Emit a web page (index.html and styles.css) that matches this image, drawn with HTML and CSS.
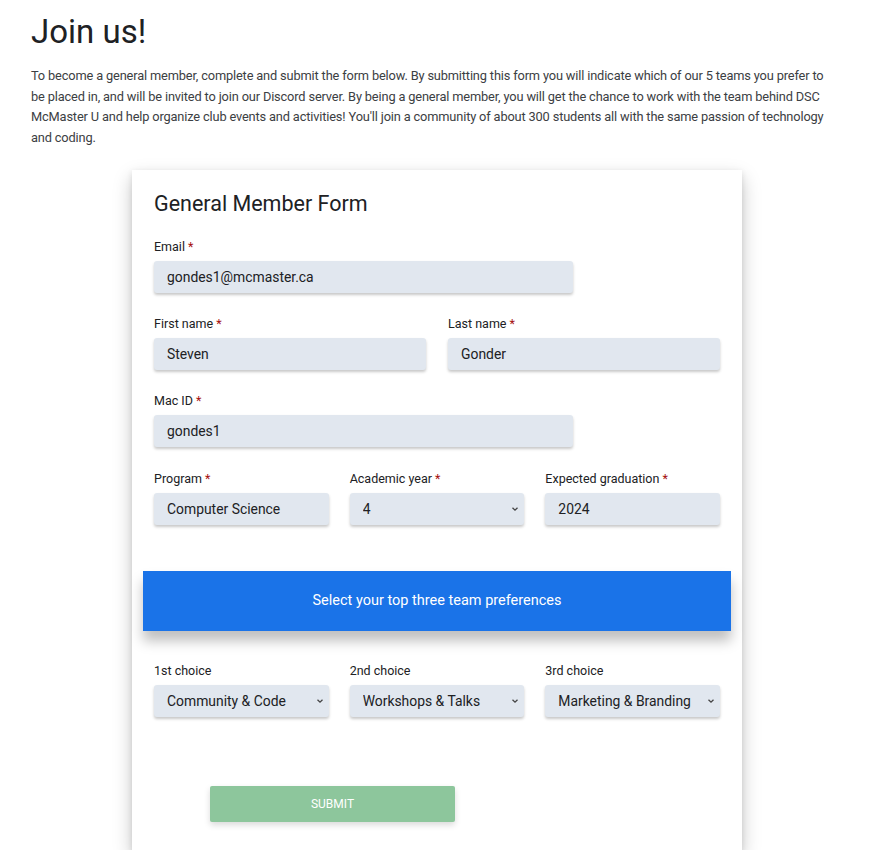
FILE: index.html
```html
<!DOCTYPE html>
<html lang="en">
<head>
<meta charset="utf-8">
<title>Join us!</title>
<link rel="stylesheet" href="styles.css">
</head>
<body>
<main class="page">
  <h1 class="title">Join us!</h1>
  <p class="intro">To become a general member, complete and submit the form below. By submitting this form you will indicate which of our 5 teams you prefer to be placed in, and will be invited to join our Discord server. By being a general member, you will get the chance to work with the team behind DSC McMaster U and help organize club events and activities! You'll join a community of about 300 students all with the same passion of technology and coding.</p>

  <form class="card">
    <h2 class="card-title">General Member Form</h2>

    <div class="field wide">
      <label class="label">Email <span class="req">*</span></label>
      <input class="control" type="text" value="gondes1@mcmaster.ca">
    </div>

    <div class="row two">
      <div class="field">
        <label class="label">First name <span class="req">*</span></label>
        <input class="control" type="text" value="Steven">
      </div>
      <div class="field">
        <label class="label">Last name <span class="req">*</span></label>
        <input class="control" type="text" value="Gonder">
      </div>
    </div>

    <div class="field wide">
      <label class="label">Mac ID <span class="req">*</span></label>
      <input class="control" type="text" value="gondes1">
    </div>

    <div class="row three">
      <div class="field">
        <label class="label">Program <span class="req">*</span></label>
        <input class="control" type="text" value="Computer Science">
      </div>
      <div class="field">
        <label class="label">Academic year <span class="req">*</span></label>
        <div class="select-wrap">
          <select class="control select"><option>4</option></select>
          <svg class="chev" width="8" height="6" viewBox="0 0 8 6"><path d="M1.5 1.8 L4 4.2 L6.5 1.8" fill="none" stroke="#444" stroke-width="1.3"/></svg>
        </div>
      </div>
      <div class="field">
        <label class="label">Expected graduation <span class="req">*</span></label>
        <input class="control" type="text" value="2024">
      </div>
    </div>

    <div class="banner">Select your top three team preferences</div>

    <div class="row three choices">
      <div class="field">
        <label class="label">1st choice</label>
        <div class="select-wrap">
          <select class="control select"><option>Community &amp; Code</option></select>
          <svg class="chev" width="8" height="6" viewBox="0 0 8 6"><path d="M1.5 1.8 L4 4.2 L6.5 1.8" fill="none" stroke="#444" stroke-width="1.3"/></svg>
        </div>
      </div>
      <div class="field">
        <label class="label">2nd choice</label>
        <div class="select-wrap">
          <select class="control select"><option>Workshops &amp; Talks</option></select>
          <svg class="chev" width="8" height="6" viewBox="0 0 8 6"><path d="M1.5 1.8 L4 4.2 L6.5 1.8" fill="none" stroke="#444" stroke-width="1.3"/></svg>
        </div>
      </div>
      <div class="field">
        <label class="label">3rd choice</label>
        <div class="select-wrap">
          <select class="control select"><option>Marketing &amp; Branding</option></select>
          <svg class="chev" width="8" height="6" viewBox="0 0 8 6"><path d="M1.5 1.8 L4 4.2 L6.5 1.8" fill="none" stroke="#444" stroke-width="1.3"/></svg>
        </div>
      </div>
    </div>

    <div class="actions">
      <button class="submit" type="button">SUBMIT</button>
    </div>
  </form>
</main>
</body>
</html>
```

FILE: styles.css
```css
* { box-sizing: border-box; }

html, body {
  margin: 0;
  padding: 0;
  background: #ffffff;
}

body {
  font-family: Roboto, "Liberation Sans", sans-serif;
  color: #3c4043;
}

.page {
  padding: 12px 31px 0 31px;
}

.title {
  margin: 0;
  font-family: Roboto, sans-serif;
  font-weight: 400;
  font-size: 33px;
  line-height: 40px;
  color: #202124;
}

.intro {
  margin: 14px 0 0 0;
  max-width: 806px;
  font-size: 12.8px;
  letter-spacing: -0.15px;
  line-height: 20.7px;
  color: #3c4043;
}

.card {
  margin: 21px 0 0 101px;
  width: 610px;
  height: 680px;
  background: #fff;
  padding: 20px 22px 0 22px;
  box-shadow: 0 8px 18px rgba(0,0,0,0.22), 0 2px 6px rgba(0,0,0,0.1);
  display: flex;
  flex-direction: column;
}

.card-title {
  margin: 0;
  font-weight: 400;
  font-size: 21.5px;
  line-height: 28px;
  color: #202124;
}

.field {
  display: flex;
  flex-direction: column;
}

.field.wide {
  width: 419px;
}

.label {
  font-size: 12.5px;
  line-height: 16px;
  color: #202124;
  margin-bottom: 6px;
}

.req {
  color: #a50e0e;
}

.card-title + .field {
  margin-top: 21px;
}

.row {
  display: grid;
  gap: 22px;
  margin-top: 23px;
}

.row.two { grid-template-columns: 1fr 1fr; }
.row.three { grid-template-columns: 1fr 1fr 1fr; gap: 21px; margin-top: 24px; }

.row + .field { margin-top: 23px; }

.control {
  width: 100%;
  height: 32px;
  border: none;
  border-radius: 3px;
  background: #e1e7ef;
  padding: 0 13px;
  font-family: Roboto, sans-serif;
  font-size: 13.9px;
  color: #202124;
  box-shadow: 0 2px 3px rgba(0,0,0,0.22);
  outline: none;
}

.select-wrap {
  position: relative;
}

.select {
  appearance: none;
  -webkit-appearance: none;
  display: block;
}

.chev {
  position: absolute;
  right: 5px;
  top: 13px;
  pointer-events: none;
}

.banner {
  margin: 46px -11px 0 -11px;
  height: 60px;
  background: #1a73e8;
  color: #fff;
  display: flex;
  align-items: center;
  justify-content: center;
  font-size: 14.5px;
  box-shadow: 0 10px 12px rgba(0,0,0,0.25);
}

.row.choices {
  margin-top: 32px;
}

.actions {
  margin-top: 69px;
  padding-left: 56px;
}

.submit {
  width: 245px;
  height: 36px;
  border: none;
  border-radius: 2px;
  background: #8dc69c;
  color: #fff;
  font-family: Roboto, sans-serif;
  font-size: 12px;
  box-shadow: 0 3px 6px rgba(0,0,0,0.15);
}
```
